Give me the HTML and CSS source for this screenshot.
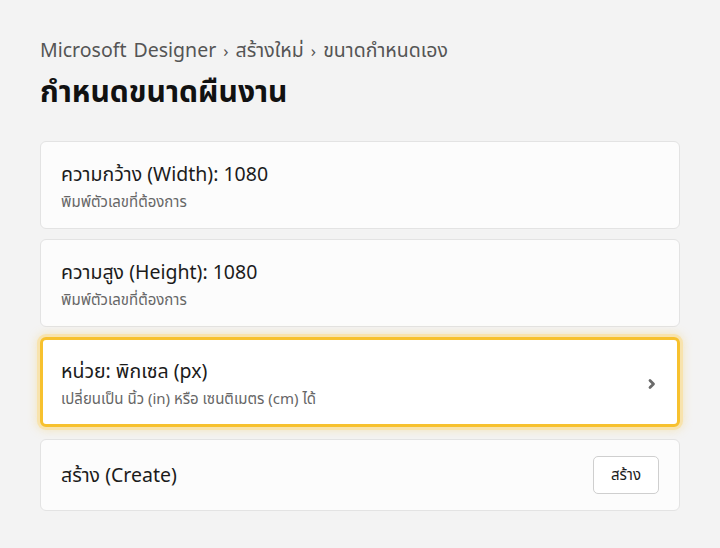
FILE: index.html
```html
<html>

<head>
    <meta charset="UTF-8">
    <meta name="viewport" content="width=device-width, initial-scale=1.0">
    <title>Custom size</title>
    <link rel="stylesheet" href="styles.css">
</head>

<body>
    <div class="page">
        <div class="crumbs">Microsoft Designer <span class="sep">&rsaquo;</span> สร้างใหม่ <span class="sep">&rsaquo;</span> ขนาดกำหนดเอง</div>
        <h1 class="title">กำหนดขนาดผืนงาน</h1>

        <div class="list">
            <div class="card">
                <div class="card-text">
                    <div class="card-title">ความกว้าง (Width): 1080</div>
                    <div class="card-sub">พิมพ์ตัวเลขที่ต้องการ</div>
                </div>
            </div>
            <div class="card">
                <div class="card-text">
                    <div class="card-title">ความสูง (Height): 1080</div>
                    <div class="card-sub">พิมพ์ตัวเลขที่ต้องการ</div>
                </div>
            </div>
            <div class="card active">
                <div class="card-text">
                    <div class="card-title">หน่วย: พิกเซล (px)</div>
                    <div class="card-sub">เปลี่ยนเป็น นิ้ว (in) หรือ เซนติเมตร (cm) ได้</div>
                </div>
                <svg class="chev" width="10" height="12" viewBox="0 0 10 12">
                    <path d="M3 2.5 L6.5 6 L3 9.5" fill="none" stroke="#6a6a6a" stroke-width="2.8" stroke-linecap="round" stroke-linejoin="round"/>
                </svg>
            </div>
            <div class="card short">
                <div class="card-title">สร้าง (Create)</div>
                <button class="btn">สร้าง</button>
            </div>
        </div>
    </div>
</body>

</html>
```

FILE: styles.css
```css
* {
    box-sizing: border-box;
}

body {
    margin: 0;
    background-color: #f3f3f3;
    font-family: "Noto Sans", "Noto Sans Thai", "Noto Sans CJK SC", sans-serif;
    color: #1b1b1b;
}

.page {
    padding: 36px 40px 0 40px;
}

.crumbs {
    font-size: 19.5px;
    color: #555555;
    line-height: 28px;
    word-spacing: 2px;
}

.sep {
    font-size: 17px;
}

.title {
    margin: 4px 0 28px 0;
    font-size: 30px;
    font-weight: 700;
    line-height: 44px;
    color: #111111;
}

.list {
    display: flex;
    flex-direction: column;
    gap: 10px;
}

.card {
    display: flex;
    align-items: center;
    justify-content: space-between;
    height: 88px;
    padding: 0 20px;
    background-color: #fcfcfc;
    border: 1px solid #e3e3e3;
    border-radius: 6px;
}

.card.active {
    height: 90px;
    margin-bottom: 2px;
    border: 3px solid #f7c12e;
    padding: 0 18px;
    box-shadow: 0 0 0 3px #f8e3ad, 0 0 10px 3px rgba(247, 200, 80, 0.35);
    background-color: #ffffff;
}

.card.short {
    height: 72px;
}

.card-title {
    font-size: 19.5px;
    line-height: 28px;
}

.card-sub {
    margin-top: 3px;
    font-size: 15px;
    line-height: 20px;
    color: #666666;
}

.chev {
    margin-right: 2px;
    margin-top: 4px;
}

.btn {
    width: 66px;
    height: 38px;
    font-family: inherit;
    font-size: 15px;
    color: #1b1b1b;
    background-color: #ffffff;
    border: 1px solid #cfcfcf;
    border-radius: 5px;
}
```
